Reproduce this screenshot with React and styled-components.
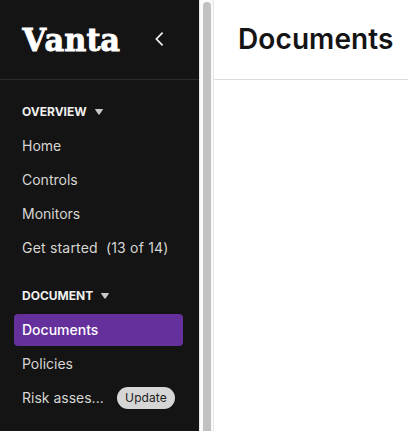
import React from "react";
import styled, { createGlobalStyle } from "styled-components";

const sections = [
  {
    title: "OVERVIEW",
    items: [
      { label: "Home" },
      { label: "Controls" },
      { label: "Monitors" },
      { label: "Get started", count: "(13 of 14)", wide: true },
    ],
  },
  {
    title: "DOCUMENT",
    items: [
      { label: "Documents", active: true },
      { label: "Policies" },
      { label: "Risk asses...", badge: "Update" },
    ],
  },
];

const App = () => {
  return (
    <>
      <GlobalStyle />
      <Layout>
        <Sidebar>
          <SidebarHeader>
            <Logo width="98" height="32" viewBox="0 0 98 32">
              <text x=".6 23.6 44.4 68 82.4" y="28" transform="scale(.95 1)">
                Vanta
              </text>
            </Logo>
            <CollapseButton aria-label="Collapse">
              <svg width="10" height="16" viewBox="0 0 10 16" fill="none">
                <path d="M8.6 1.7 2.4 8l6.2 6.3" stroke="#f2f2ee" strokeWidth="1.7" />
              </svg>
            </CollapseButton>
          </SidebarHeader>
          <Nav>
            {sections.map((section) => (
              <Section key={section.title}>
                <SectionTitle>
                  {section.title}
                  <svg width="8" height="6" viewBox="0 0 8 6">
                    <path d="M.6 0h6.8q.9 0 .4.8L4.7 5.3q-.7.9-1.4 0L.2.8Q-.3 0 .6 0z" fill="#c8c8c8" />
                  </svg>
                </SectionTitle>
                {section.items.map((item) => (
                  <NavItem key={item.label} $active={item.active} $wide={item.wide}>
                    <Label>{item.label}</Label>
                    {item.count && <Count>{item.count}</Count>}
                    {item.badge && <Badge>{item.badge}</Badge>}
                  </NavItem>
                ))}
              </Section>
            ))}
          </Nav>
        </Sidebar>
        <ScrollTrack>
          <ScrollThumb />
        </ScrollTrack>
        <Main>
          <PageHeader>
            <h1>Documents</h1>
          </PageHeader>
        </Main>
      </Layout>
    </>
  );
};

const GlobalStyle = createGlobalStyle`
  * {
    box-sizing: border-box;
  }
  body {
    margin: 0;
    overflow: hidden;
    font-family: Inter, "Liberation Sans", sans-serif;
    background-color: white;
  }
`;
const Layout = styled.div`
  display: flex;
  height: 100vh;
`;
const Sidebar = styled.aside`
  display: flex;
  flex-direction: column;
  flex: none;
  width: 199px;
  background-color: #141414;
`;
const SidebarHeader = styled.div`
  display: flex;
  align-items: center;
  justify-content: space-between;
  height: 80px;
  padding: 0 35px 2px 22px;
  border-bottom: 1px solid #2b2b2b;
`;
const Logo = styled.svg`
  overflow: visible;
  text {
    font-family: "DejaVu Serif", serif;
    font-size: 32px;
    font-weight: bold;
    fill: white;
    stroke: white;
    stroke-width: 0.9px;
  }
`;
const CollapseButton = styled.button`
  display: flex;
  padding: 0;
  border: none;
  background: none;
  cursor: pointer;
`;
const Nav = styled.nav`
  display: flex;
  flex-direction: column;
  gap: 16px;
  padding: 16px 16px 0 14px;
`;
const Section = styled.div`
  display: flex;
  flex-direction: column;
  gap: 2px;
`;
const SectionTitle = styled.div`
  display: flex;
  align-items: center;
  gap: 8px;
  height: 32px;
  padding: 0 8px 1px;
  color: #f0f0ee;
  font-size: 12px;
  font-weight: 700;
`;
const NavItem = styled.a`
  display: flex;
  align-items: center;
  justify-content: flex-start;
  height: 32px;
  padding: 0 8px;
  border-radius: 4px;
  color: ${({ $active }) => ($active ? "white" : "#d6d6d2")};
  background-color: ${({ $active }) => ($active ? "#652f9c" : "transparent")};
  font-size: 14px;
  font-weight: ${({ $active }) => ($active ? 500 : 400)};
  letter-spacing: ${({ $wide }) => ($wide ? "0.2px" : "0")};
  cursor: pointer;
`;
const Label = styled.span`
  padding-bottom: 2px;
  white-space: nowrap;
`;
const Count = styled.span`
  margin-left: 8px;
  padding-bottom: 2px;
  white-space: nowrap;
`;
const Badge = styled.span`
  flex: none;
  display: flex;
  align-items: center;
  justify-content: center;
  width: 58px;
  height: 22px;
  margin-left: auto;
  padding-bottom: 1px;
  border-radius: 11px;
  color: #1b1b1b;
  background-color: #d6d6d6;
  font-size: 12px;
  letter-spacing: 0.1px;
`;
const ScrollTrack = styled.div`
  flex: none;
  width: 15px;
  padding: 2px 2px 0 3px;
  border-left: 1px solid #e8e8e8;
  border-right: 1px solid #e6e6e6;
  background-color: #fafafa;
`;
const ScrollThumb = styled.div`
  width: 8px;
  height: 100%;
  border-radius: 4px 4px 0 0;
  background-color: #c1c1c1;
`;
const Main = styled.main`
  flex: 1;
  min-width: 0;
`;
const PageHeader = styled.header`
  display: flex;
  align-items: center;
  height: 80px;
  padding: 0 0 2px 24px;
  border-bottom: 1px solid #dcdcdc;
  h1 {
    margin: 0;
    color: #141414;
    font-size: 28px;
    font-weight: 600;
    letter-spacing: 0.1px;
  }
`;
export default App;
